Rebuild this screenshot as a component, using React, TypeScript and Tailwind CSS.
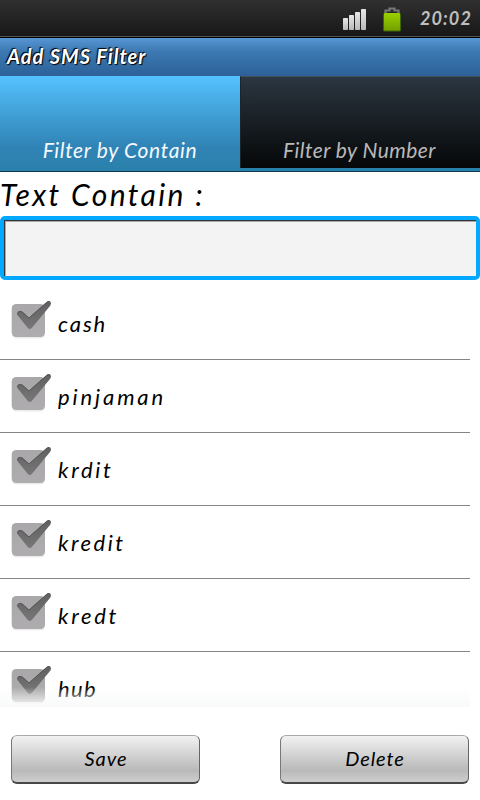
const filters = [
  { id: 1, name: "cash", spacing: "tracking-[1.9px]" },
  { id: 2, name: "pinjaman", spacing: "tracking-[2.9px]" },
  { id: 3, name: "krdit", spacing: "tracking-[2.7px]" },
  { id: 4, name: "kredit", spacing: "tracking-[2.5px]" },
  { id: 5, name: "kredt", spacing: "tracking-[2.7px]" },
  { id: 6, name: "hub", spacing: "tracking-[1.3px]" },
];

const StatusBar = () => (
  <div className="flex h-[38px] items-center justify-end border-b border-black bg-linear-to-b from-[#303030] to-[#171717] pr-[9px] shadow-[inset_0_-1px_0_#555]">
    <svg className="mr-[13px] h-[24px] w-[28px]" viewBox="0 0 28 24">
      <defs>
        <linearGradient id="bars" x1="0" y1="0" x2="0" y2="1">
          <stop offset="0" stopColor="#e8e8e8" />
          <stop offset="1" stopColor="#b9b9b9" />
        </linearGradient>
      </defs>
      <g fill="url(#bars)">
        <rect x="2" y="11" width="5" height="12" rx="0.8" />
        <rect x="8" y="8" width="5" height="15" rx="0.8" />
        <rect x="14" y="5" width="5" height="18" rx="0.8" />
        <rect x="20" y="2" width="5" height="21" rx="0.8" />
      </g>
    </svg>
    <svg className="mr-[18px] h-[26px] w-[20px]" viewBox="0 0 20 26">
      <defs>
        <linearGradient id="battery" x1="0" y1="0" x2="0" y2="1">
          <stop offset="0" stopColor="#9bd000" />
          <stop offset="1" stopColor="#73a000" />
        </linearGradient>
      </defs>
      <path d="M3.5 7V4.5h4V2.5h5v2h4V7" fill="none" stroke="#777" strokeWidth="2.2" />
      <rect x="1" y="7" width="18" height="18.5" rx="1.5" fill="#3f6700" />
      <rect x="2" y="7" width="16" height="17.5" rx="1" fill="url(#battery)" />
    </svg>
    <span className="w-[51px] text-[18px] font-bold tracking-[1.1px] text-[#bebebe]">20:02</span>
  </div>
);

const Check = () => (
  <svg className="h-[40px] w-[42px] shrink-0" viewBox="0 0 42 40">
    <defs>
      <linearGradient id="box" x1="0" y1="0" x2="0" y2="1">
        <stop offset="0" stopColor="#a9a7a9" />
        <stop offset="1" stopColor="#aeacae" />
      </linearGradient>
      <linearGradient id="tick" x1="0" y1="0" x2="0" y2="1">
        <stop offset="0" stopColor="#606060" />
        <stop offset="1" stopColor="#777" />
      </linearGradient>
    </defs>
    <rect x="1" y="6" width="33" height="32.5" rx="4.5" fill="#ececec" />
    <rect x="0.7" y="4" width="33.3" height="33" rx="4.5" fill="url(#box)" />
    <path
      d="M6.8 15.6Q5.4 12.8 7.6 11.4Q9.6 10.4 11.6 11.8L18 17.4L35.8 1.8Q37.7 0.4 39.3 1.6Q40.8 3.2 39.4 5.6L20.8 28Q18.8 30.2 16.8 28Z"
      fill="url(#tick)"
    />
    <path
      d="M6.8 14.4Q6 12.4 7.8 11.6Q9.6 11 11.2 12.1L18 18L36 2.2Q37.5 1.2 38.8 2"
      fill="none"
      stroke="#4c4c4c"
      strokeWidth="0.7"
    />
  </svg>
);

const ActionButton = ({ label }: { label: string }) => (
  <button className="h-[49px] w-[189px] rounded-[6px] border border-t-[#aaa] border-r-[#666] border-b-2 border-b-[#484848] border-l-[#777] bg-linear-to-b from-[#f2f2f2] via-[#b9b9b9] via-75% to-[#cecece] pb-[3px] pl-px text-[20px] tracking-[0.9px] text-black">
    {label}
  </button>
);

export default function App() {
  return (
    <div className="flex h-[800px] w-[480px] flex-col overflow-hidden bg-white font-['Lato',sans-serif] whitespace-nowrap italic">
      <StatusBar />
      <header className="flex h-[38px] shrink-0 items-center bg-linear-to-b from-[#5797d5] via-[#3d79b2] via-35% to-[#2c6198] pb-[2px] pl-[7px] text-[20px] font-bold tracking-[1px] text-white [text-shadow:-1px_-1px_1px_#000,1px_1px_1px_#000]">
        Add SMS Filter
      </header>

      {/* Tabs */}
      <div className="flex h-[96px] shrink-0 border-b border-[#0c3a53] bg-[#2780aa] text-[21px]">
        <div className="flex w-[240px] items-end justify-center bg-linear-to-b from-[#55c2ff] via-[#3083b5] via-75% to-[#2a81aa] pb-[5px] leading-8 tracking-[0.65px] text-[#f4faff]">
          Filter by Contain
        </div>
        <div className="flex h-[92px] w-[240px] items-end justify-center border-t border-l border-t-[#454f5a] border-l-[#1c242c] bg-linear-to-b from-[#2c3641] via-[#181e24] via-50% to-[#060809] pr-[2px] pb-[2px] leading-8 tracking-[0.45px] text-[#b9b9b9]">
          Filter by Number
        </div>
      </div>

      <label className="h-[44px] shrink-0 text-[30px] leading-[45px] tracking-[2.4px] text-black">
        Text Contain :
      </label>
      <div className="h-[64px] shrink-0 rounded-[5px] border-4 border-[#00a8ff] bg-[#00a8ff]">
        <div className="h-full w-full border-t border-l border-[#333] bg-[#f2f3f2] shadow-[inset_1px_1px_0_#aaa]" />
      </div>

      {/* Filter list */}
      <div className="relative h-[427px] w-[470px] shrink-0 overflow-hidden pt-[7px]">
        {filters.map((filter) => (
          <div
            key={filter.id}
            className="flex h-[73px] items-center border-b border-[#858585] pl-[11px]"
          >
            <div className="-mt-[7px]">
              <Check />
            </div>
            <span className={`ml-[5px] text-[22px] text-black ${filter.spacing}`}>
              {filter.name}
            </span>
          </div>
        ))}
        <div className="absolute inset-x-0 bottom-0 h-[20px] bg-linear-to-b from-[#f8faf9]/0 to-[#f8faf9]/95" />
      </div>

      <div className="flex justify-between pt-[28px] pr-[11px] pl-[11px]">
        <ActionButton label="Save" />
        <ActionButton label="Delete" />
      </div>
    </div>
  );
}
